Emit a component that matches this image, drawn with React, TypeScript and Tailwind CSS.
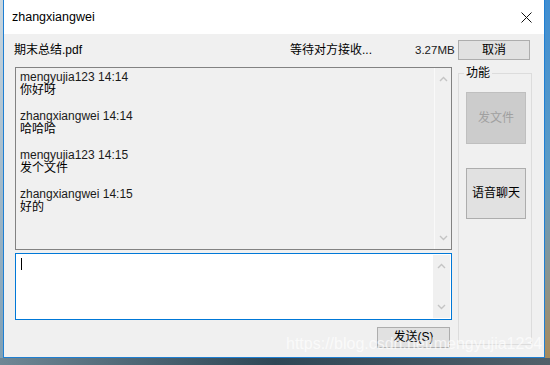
import React from 'react';

const messages = [
  { user: 'mengyujia123', time: '14:14', text: '你好呀' },
  { user: 'zhangxiangwei', time: '14:14', text: '哈哈哈' },
  { user: 'mengyujia123', time: '14:15', text: '发个文件' },
  { user: 'zhangxiangwei', time: '14:15', text: '好的' },
];

const Chevron = ({ up }: { up?: boolean }) => (
  <svg width="9" height="6" viewBox="0 0 9 6" className="block">
    <path
      d={up ? 'M1 5 L4.5 1.5 L8 5' : 'M1 1 L4.5 4.5 L8 1'}
      fill="none"
      stroke="#c4c4c4"
      strokeWidth="1.4"
    />
  </svg>
);

const ScrollTrack = ({ className }: { className: string }) => (
  <div className={`w-[17px] flex flex-col items-center justify-between ${className}`}>
    <Chevron up />
    <Chevron />
  </div>
);

const ChatWindow = () => {
  return (
    <div
      className="relative w-[550px] h-[365px] overflow-hidden flex flex-col bg-[#3d5565] text-[12px] leading-[13px] text-black"
      style={{ fontFamily: '"Liberation Sans", "Noto Sans CJK SC", sans-serif' }}
    >
      <div className="flex h-[358px]">
        {/* desktop strip left */}
        <div className="w-[3px] bg-gradient-to-b from-[#c9d6df] to-[#7f9fb4]" />

        {/* window */}
        <div className="w-[542px] flex flex-col border-x border-b border-[#1f7fd2] bg-[#f0f0f0]">
          {/* title bar */}
          <div className="h-[34px] bg-white flex items-center justify-between pl-[8px] pr-[12px]">
            <span className="text-[12.5px]">zhangxiangwei</span>
            <svg width="11" height="11" viewBox="0 0 11 11">
              <path d="M0.5 0.5 L10.5 10.5 M10.5 0.5 L0.5 10.5" stroke="#111" strokeWidth="1" />
            </svg>
          </div>

          {/* file transfer row */}
          <div className="flex items-center h-[20px] mt-[6px]">
            <div className="w-[286px] pl-[10px]">期末总结.pdf</div>
            <div className="w-[125px]">等待对方接收...</div>
            <div className="w-[43px] text-[11.5px] text-[#1a1a1a]">3.27MB</div>
            <button className="w-[72px] h-[20px] bg-[#e1e1e1] border border-[#adadad] text-[12px]">
              取消
            </button>
          </div>

          {/* main area */}
          <div className="flex mt-[7px] ml-[11px] gap-[6px]">
            <div className="w-[437px] flex flex-col">
              {/* message log */}
              <div className="h-[183px] flex border border-[#828282] bg-[#f0f0f0]">
                <div className="flex-1 pl-[4px] pt-[3px]">
                  {messages.map((m, i) => (
                    <div key={i} className="mb-[13px]">
                      <div className="text-[#1a1a1a]">
                        {m.user} {m.time}
                      </div>
                      <div>{m.text}</div>
                    </div>
                  ))}
                </div>
                <ScrollTrack className="border-l border-[#f9f9f9] py-[8px]" />
              </div>

              {/* input */}
              <div className="h-[67px] mt-[3px] flex border border-[#0078d7] bg-white">
                <div className="flex-1 pl-[5px] pt-[4px]">
                  <div className="w-px h-[12px] bg-black" />
                </div>
                <div className="py-px pr-px flex">
                  <ScrollTrack className="bg-[#f0f0f0] py-[8px]" />
                </div>
              </div>

              <div className="flex justify-end mt-[7px] mr-[2px]">
                <button className="w-[73px] h-[21px] bg-[#e1e1e1] border border-[#adadad] text-[12px]">
                  发送(S)
                </button>
              </div>
            </div>

            {/* function group */}
            <fieldset className="w-[74px] h-[278px] border border-[#dcdcdc] pl-[5px]">
              <legend className="px-[2px] leading-[13px]">功能</legend>
              <button
                disabled
                className="block ml-[2px] mt-[12px] w-[60px] h-[52px] bg-[#cccccc] border border-[#bfbfbf] text-[#a0a0a0] text-[12px]"
              >
                发文件
              </button>
              <button className="block ml-[2px] mt-[24px] w-[60px] h-[51px] bg-[#e1e1e1] border border-[#adadad] text-[12px]">
                语音聊天
              </button>
            </fieldset>
          </div>
        </div>

        {/* desktop strip right */}
        <div className="flex-1 bg-gradient-to-b from-[#3f8ed2] via-[#5e9cc4] to-[#a68a5c]" />
      </div>

      {/* desktop strip bottom */}
      <div className="flex-1 bg-gradient-to-r from-[#6f8795] via-[#2f4756] to-[#51606a]" />

      {/* watermark */}
      <div className="absolute left-[286px] top-[335px] text-[16px] leading-[18px] text-white/70 pointer-events-none">
        https://blog.csdn.net/mengyujia1234
      </div>
    </div>
  );
};

export default function App() {
  return <ChatWindow />;
}
